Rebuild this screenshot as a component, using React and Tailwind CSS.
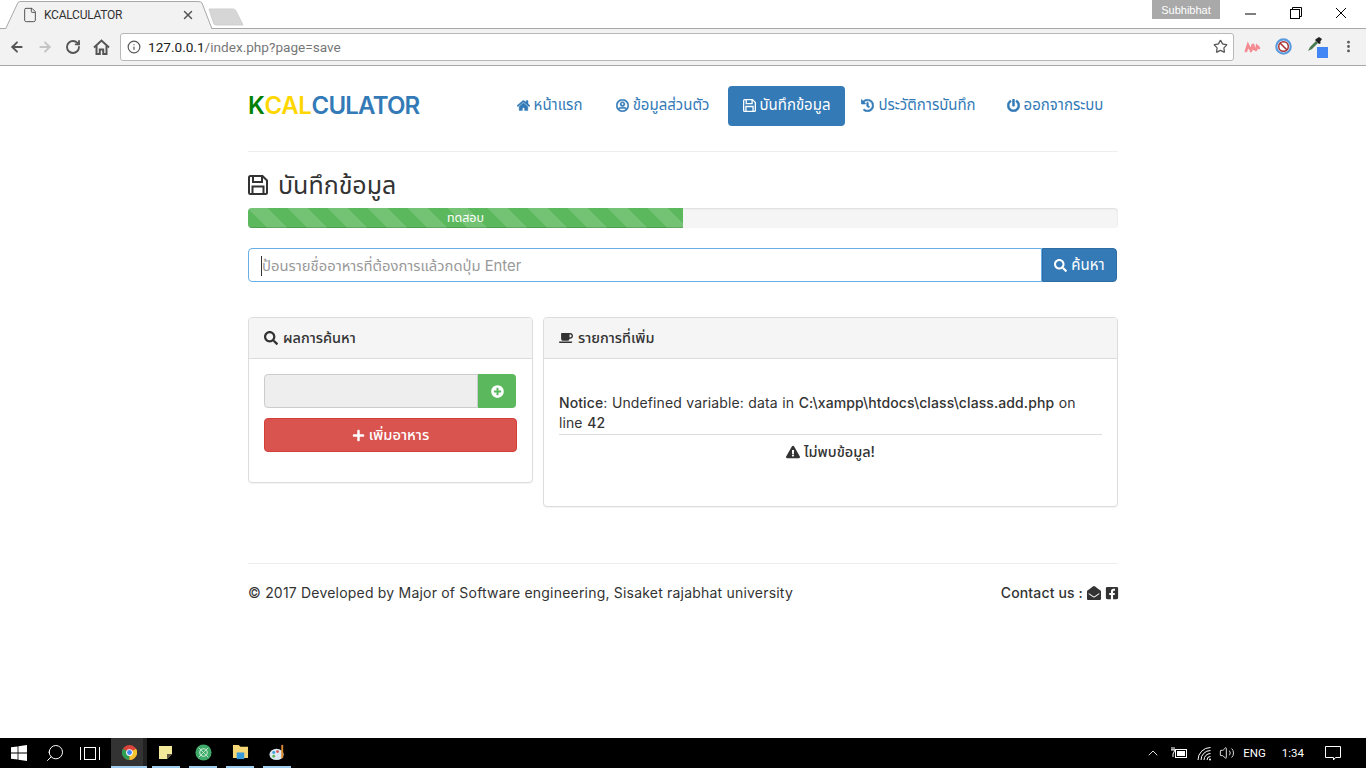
import React from 'react';
import { FaHome, FaRegUserCircle, FaHistory, FaPowerOff, FaSearch, FaPlusCircle, FaPlus, FaCoffee, FaExclamationTriangle, FaEnvelopeOpen, FaFacebookSquare } from 'react-icons/fa';
import { ArrowLeft, ArrowRight, RotateCw, Info, Star, X, File, ChevronUp, Volume2, Search, MoreVertical } from 'lucide-react';

// floppy disk, square with a cut corner like the old font awesome one
function SaveIcon({ className }) {
  return (
    <svg className={className} viewBox="0 0 20 20" fill="none" stroke="currentColor" strokeWidth="2">
      <path d="M1 2.5 Q1 1 2.5 1 H14.5 L19 5.5 V17.5 Q19 19 17.5 19 H2.5 Q1 19 1 17.5 Z" />
      <path d="M5 1 V7 H14 V1" />
      <path d="M4.5 19 V11.5 H15.5 V19" />
    </svg>
  );
}

const navItems = [
  { label: 'หน้าแรก', icon: FaHome, width: 'w-[95px]' },
  { label: 'ข้อมูลส่วนตัว', icon: FaRegUserCircle, width: 'w-[127px]' },
  { label: 'บันทึกข้อมูล', icon: SaveIcon, width: 'w-[117px]', active: true },
  { label: 'ประวัติการบันทึก', icon: FaHistory, width: 'w-[143px]' },
  { label: 'ออกจากระบบ', icon: FaPowerOff, width: 'w-[126px]' },
];

function WindowsChrome() {
  return (
    <header className="bg-white text-[#333]">
      {/* Tab strip */}
      <div className="h-[29px] flex items-end justify-between">
        <div className="flex items-end pl-[5px]">
          <div className="relative w-[208px] h-[28px] flex items-center pl-[17px] pr-[18px]">
            <svg className="absolute left-0 top-0" width="208" height="29" viewBox="0 0 208 29">
              <path d="M0.5 28 L13 1.5 Q14 0.5 16 0.5 L193 0.5 Q196 0.5 197 2 L207 28" fill="#f2f2f2" stroke="#a8a8a8" />
            </svg>
            <File className="relative w-[16px] h-[16px] text-[#555]" strokeWidth={1.5} />
            <span className="relative ml-[6px] flex-1 text-[12px] tracking-[-0.25px] text-[#333] font-['Roboto',sans-serif]">KCALCULATOR</span>
            <X className="relative w-[14px] h-[14px] text-[#555]" strokeWidth={2.5} />
          </div>
          <svg className="mb-[3px] -ml-[5px]" width="36" height="18" viewBox="0 0 36 18">
            <path d="M1 1 L25 1 Q27 1 28 3 L35 17 L8 17 Q6 17 5.5 15 Z" fill="#d6d6d6" stroke="#cfcfcf" />
          </svg>
        </div>
        <div className="flex h-[29px] items-start">
          <div className="w-[68px] h-[19px] bg-[#a9a9a9] text-white text-[11px] flex items-center justify-center font-['Liberation_Sans',sans-serif]">Subhibhat</div>
          <div className="w-[146px] h-[26px] flex items-center justify-between pl-[23px] pr-[18px]">
            <svg width="15" height="15" viewBox="0 0 15 15"><path d="M2 8 H13" stroke="#000" strokeWidth="1" /></svg>
            <svg width="12" height="12" viewBox="0 0 12 12" fill="none" stroke="#000">
              <rect x="0.5" y="2.5" width="9" height="9" />
              <path d="M2.5 2.5 V0.5 H11.5 V9.5 H9.5" />
            </svg>
            <svg width="14" height="14" viewBox="0 0 14 14"><path d="M2 2 L12 12 M12 2 L2 12" stroke="#000" strokeWidth="1" /></svg>
          </div>
        </div>
      </div>
      {/* Toolbar */}
      <div className="h-[38px] pb-px bg-[#f2f2f2] border-y border-[#a8a8a8] flex items-center -mt-px">
        <div className="flex items-center w-[120px] pl-[9px] gap-[12px]">
          <ArrowLeft className="w-[16px] h-[16px] text-[#555]" strokeWidth={2.8} />
          <ArrowRight className="w-[16px] h-[16px] text-[#c4c4c4]" strokeWidth={2.8} />
          <RotateCw className="w-[16px] h-[16px] text-[#555]" strokeWidth={2.8} />
          <svg width="17" height="16" viewBox="0 0 17 16" fill="none" stroke="#555" strokeWidth="2">
            <path d="M1 8.5 L8.5 1.5 L16 8.5" />
            <path d="M3.5 7 V15 H6.8 V10.5 H10.2 V15 H13.5 V7" />
          </svg>
        </div>
        <div className="w-[1114px] h-[28px] bg-white border border-[#b8b8b8] rounded-[3px] flex items-center pl-[6px] pr-[5px]">
          <Info className="w-[14px] h-[14px] text-[#555]" strokeWidth={2} />
          <span className="ml-[7px] flex-1 text-[13.6px] font-['Roboto',sans-serif] text-[#777]">
            <span className="text-[#222]">127.0.0.1</span>/index.php?page=save
          </span>
          <Star className="w-[15px] h-[15px] text-[#555]" strokeWidth={2} />
        </div>
        <div className="flex-1 flex items-center pl-[10px] gap-[15px]">
          <svg width="16" height="12" viewBox="0 0 16 12">
            <path d="M2 10 L4 4 L6 8 M7 10 L9 3 L10 8 M12 9 L13 5 L15 7" stroke="#f48a92" strokeWidth="2.6" strokeLinecap="round" fill="none" />
          </svg>
          <svg width="17" height="17" viewBox="0 0 17 17">
            <circle cx="8.5" cy="8.5" r="7.2" fill="#fff" stroke="#5a9be0" strokeWidth="2.2" />
            <circle cx="8.5" cy="8.5" r="4.8" fill="#fff" stroke="#a83232" strokeWidth="1.5" />
            <path d="M5 5 L12 12" stroke="#a83232" strokeWidth="1.6" />
          </svg>
          <div className="relative w-[21px] h-[22px]">
            <svg width="16" height="16" viewBox="0 0 16 16" className="absolute left-0 top-0">
              <path d="M1 15 L3 11 L9 5 L11 7 L5 13 Z" fill="#4a7a50" />
              <path d="M9 3 L12 1 L15 3 L13 6 L14 7 L12 8 L8 4 Z" fill="#222" />
            </svg>
            <div className="absolute right-0 bottom-0 w-[11px] h-[11px] bg-[#4285f4]" />
          </div>
          <MoreVertical className="w-[15px] h-[15px] text-[#555] -ml-[2px]" strokeWidth={2.5} />
        </div>
      </div>
    </header>
  );
}

function Panel({ icon: Icon, title, className, children }) {
  return (
    <div className={`bg-white border border-[#ddd] rounded-[4px] shadow-[0_1px_1px_rgba(0,0,0,0.05)] ${className}`}>
      <div className="h-[41px] bg-[#f5f5f5] border-b border-[#ddd] rounded-t-[3px] px-[15px] flex items-center gap-[5px] text-[14.5px] font-medium text-[#333]">
        <Icon className="w-[14px] h-[14px]" />
        {title}
      </div>
      {children}
    </div>
  );
}

function Taskbar() {
  const apps = [
    <svg key="note" width="14" height="13" viewBox="0 0 14 13"><path d="M0 0 L13 0 L13 8 L8 13 L0 13 Z" fill="#f3e99b" /><path d="M13 8 L8 13 L8 8 Z" fill="#5c5340" /></svg>,
    <svg key="atom" width="17" height="17" viewBox="0 0 18 18"><circle cx="9" cy="9" r="8.5" fill="#3fa96a" /><circle cx="9" cy="9" r="4" fill="none" stroke="#bfe8cc" strokeWidth="1.2" /><path d="M4 4 L14 14 M14 4 L4 14" stroke="#bfe8cc" strokeWidth="1" /></svg>,
    <svg key="folder" width="17" height="16" viewBox="0 0 18 17"><path d="M1 1 L7 1 L9 3 L17 3 L17 15 L1 15 Z" fill="#f6d775" /><rect x="5" y="9" width="8" height="7" fill="#3a9bdc" /></svg>,
    <svg key="paint" width="17" height="17" viewBox="0 0 18 18"><ellipse cx="8" cy="11" rx="7.5" ry="6" fill="#dbe7f0" /><circle cx="5" cy="9" r="1.5" fill="#3a9bdc" /><circle cx="9" cy="8" r="1.5" fill="#d9534f" /><circle cx="5" cy="13" r="1.5" fill="#5cb85c" /><path d="M14 1 L14 15" stroke="#e08a2e" strokeWidth="2" /></svg>,
  ];
  return (
    <footer className="h-[30px] bg-black flex items-center text-white">
      <div className="flex items-center h-full">
        <div className="w-[37px] flex justify-center">
          <svg width="16" height="16" viewBox="0 0 16 16" fill="#fff">
            <path d="M0 2.3 L6.6 1.4 L6.6 7.5 L0 7.5 Z M7.4 1.3 L16 0 L16 7.5 L7.4 7.5 Z M0 8.4 L6.6 8.4 L6.6 14.6 L0 13.7 Z M7.4 8.4 L16 8.4 L16 16 L7.4 14.8 Z" />
          </svg>
        </div>
        <div className="w-[36px] flex justify-center"><Search className="w-[20px] h-[20px] -scale-x-100" strokeWidth={1.2} /></div>
        <div className="w-[38px] pr-[4px] flex justify-center items-center">
          <div className="w-[20px] h-[13px] border-x border-white flex justify-center"><div className="w-[12px] h-[13px] border border-white bg-black" /></div>
        </div>
        <div className="w-[32px] pl-[4px] h-full bg-[#333] border-b-2 border-[#9fcdf0] flex justify-center items-center">
          <svg width="15" height="15" viewBox="0 0 16 16">
            <circle cx="8" cy="8" r="8" fill="#d9453a" />
            <path d="M8 16 A8 8 0 0 1 1 4 L8 8 Z" fill="#2f9e52" />
            <path d="M8 16 A8 8 0 0 0 15 4 L8 8 Z" fill="#f4c430" />
            <circle cx="8" cy="8" r="3.6" fill="#fff" />
            <circle cx="8" cy="8" r="2.6" fill="#4285f4" />
          </svg>
        </div>
        <div className="w-[4px] h-full bg-[#222] border-b-2 border-[#9fcdf0] mr-[5px]" />
        {apps.map((app, i) => (
          <div key={i} className="w-[28px] h-full mr-[9px] border-b-2 border-[#9fcdf0] flex justify-center items-center">{app}</div>
        ))}
      </div>
      <div className="ml-auto flex items-center h-full text-[11.5px] font-['Roboto',sans-serif]">
        <ChevronUp className="w-[16px] h-[16px] mr-[9px]" strokeWidth={1.3} />
        <svg width="17" height="12" viewBox="0 0 17 12" className="mr-[10px]" fill="none" stroke="#fff">
          <rect x="5.5" y="2.5" width="11" height="8" /><rect x="7" y="4" width="8" height="5" fill="#fff" stroke="none" />
          <path d="M2 0 L2 3 M4 0 L4 3 M1 3 L5 3 L3 7 L3 10" />
        </svg>
        <svg width="15" height="15" viewBox="0 0 15 15" className="mr-[7px]" fill="none" stroke="#fff" strokeWidth="1">
          <path d="M1 14 A12.5 12.5 0 0 1 13.5 1.5 M4 14 A9.5 9.5 0 0 1 13.5 4.5 M7 14 A6.5 6.5 0 0 1 13.5 7.5 M10 14 A3.5 3.5 0 0 1 13.5 10.5" />
          <circle cx="13" cy="13.5" r="1" fill="#fff" stroke="none" />
        </svg>
        <Volume2 className="w-[16px] h-[16px] mr-[8px]" strokeWidth={1.3} />
        <span className="mr-[16px]">ENG</span>
        <span className="mr-[20px]">1:34</span>
        <svg width="18" height="17" viewBox="0 0 18 17" className="mr-[24px]" fill="none" stroke="#fff">
          <path d="M1.5 1.5 H16.5 V12.5 H11.5 L9.5 15 V12.5 H1.5 Z" />
        </svg>
      </div>
    </footer>
  );
}

export default function App() {
  return (
    <div className="h-[768px] flex flex-col overflow-hidden bg-white font-['Inter','Noto_Sans','Noto_Sans_Thai','DejaVu_Sans',sans-serif] text-[14px] leading-[20px] text-[#333]">
      <WindowsChrome />

      <main className="flex-1">
        <div className="w-[870px] mx-auto">
          {/* Navbar */}
          <div className="flex justify-between items-center pt-[20px]">
            <div className="text-[24px] leading-[40px] font-semibold">
              <span className="text-[#008000] tracking-[-0.5px]">K</span>
              <span className="text-[#ffd700] tracking-[-0.3px]">CAL</span>
              <span className="text-[#337ab7] tracking-[-0.8px]">CULATOR</span>
            </div>
            <nav className="flex gap-[2px]">
              {navItems.map(item => {
                const Icon = item.icon;
                return (
                  <a
                    key={item.label}
                    className={`h-[40px] ${item.width} pb-[2px] text-[15px] rounded-[4px] flex items-center justify-center gap-[4px] whitespace-nowrap ${
                      item.active ? 'bg-[#337ab7] text-white' : 'text-[#337ab7]'
                    }`}
                  >
                    <Icon className="w-[13px] h-[13px]" strokeWidth={item.icon === SaveIcon ? 2.4 : 20} />
                    {item.label}
                  </a>
                );
              })}
            </nav>
          </div>
          <hr className="mt-[25px] border-t border-[#eee]" />

          {/* Page title */}
          <h1 className="mt-[20px] h-[26px] flex items-center gap-[10px] text-[25px] leading-[26px] font-normal">
            <SaveIcon className="w-[20px] h-[20px]" />
            บันทึกข้อมูล
          </h1>

          {/* Progress */}
          <div className="mt-[10px] h-[20px] bg-[#f5f5f5] rounded-[4px] shadow-[inset_0_1px_2px_rgba(0,0,0,0.1)] overflow-hidden">
            <div className="w-[435px] h-full bg-[#5cb85c] bg-[linear-gradient(45deg,rgba(255,255,255,0.15)_25%,transparent_25%,transparent_50%,rgba(255,255,255,0.15)_50%,rgba(255,255,255,0.15)_75%,transparent_75%,transparent)] bg-[length:40px_40px] shadow-[inset_0_-1px_0_rgba(0,0,0,0.15)] flex items-center justify-center text-[12.5px] text-white">
              ทดสอบ
            </div>
          </div>

          {/* Search */}
          <div className="mt-[20px] flex h-[34px] w-[869px]">
            <div className="flex-1 bg-white border border-[#66afe9] rounded-l-[4px] flex items-center pl-[12px] pt-px text-[14.8px] text-[#999]">
              <span className="w-px h-[20px] bg-[#333]" />
              ป้อนรายชื่ออาหารที่ต้องการแล้วกดปุ่ม Enter
            </div>
            <button className="w-[75px] bg-[#337ab7] border border-[#2e6da4] rounded-r-[4px] text-white text-[15px] flex items-center justify-center gap-[4px]">
              <FaSearch className="w-[13px] h-[13px]" />
              ค้นหา
            </button>
          </div>

          {/* Panels */}
          <div className="mt-[35px] flex items-start gap-[10px]">
            <Panel icon={FaSearch} title="ผลการค้นหา" className="w-[285px]">
              <div className="pt-[15px] px-[15px] pb-[30px]">
                <div className="flex h-[34px] w-[252px]">
                  <div className="flex-1 bg-[#eee] border border-[#ccc] rounded-l-[4px]" />
                  <div className="w-[38px] bg-[#5cb85c] rounded-r-[4px] flex items-center justify-center">
                    <FaPlusCircle className="w-[13px] h-[13px] text-white" />
                  </div>
                </div>
                <button className="mt-[10px] w-[253px] h-[34px] bg-[#d9534f] border border-[#d43f3a] rounded-[4px] text-white text-[14.7px] flex items-center justify-center gap-[4px] font-medium">
                  <FaPlus className="w-[13px] h-[13px]" />
                  เพิ่มอาหาร
                </button>
              </div>
            </Panel>

            <Panel icon={FaCoffee} title="รายการที่เพิ่ม" className="flex-1">
              <div className="pt-[34px] px-[15px] pb-[44px]">
                <p className="tracking-[0.1px] [word-spacing:0.5px]">
                  <b className="font-medium">Notice</b>: Undefined variable: data in <b className="font-medium">C:\xampp\htdocs\class\class.add.php</b> on<br />
                  line <b className="font-medium">42</b>
                </p>
                <hr className="mt-px border-t border-[#ddd]" />
                <div className="mt-[7px] flex items-center justify-center gap-[4px] text-[14.5px] font-medium">
                  <FaExclamationTriangle className="w-[14px] h-[14px]" />
                  ไม่พบข้อมูล!
                </div>
              </div>
            </Panel>
          </div>

          {/* Footer */}
          <hr className="mt-[56px] border-t border-[#eee]" />
          <div className="mt-[19px] flex justify-between items-center">
            <span className="tracking-[0.2px]">© 2017 Developed by Major of Software engineering, Sisaket rajabhat university</span>
            <span className="flex items-center gap-[4px] font-medium tracking-[0.15px] -mr-px">
              Contact us :
              <FaEnvelopeOpen className="w-[14px] h-[14px]" />
              <FaFacebookSquare className="w-[14px] h-[14px]" />
            </span>
          </div>
        </div>
      </main>

      <Taskbar />
    </div>
  );
}
